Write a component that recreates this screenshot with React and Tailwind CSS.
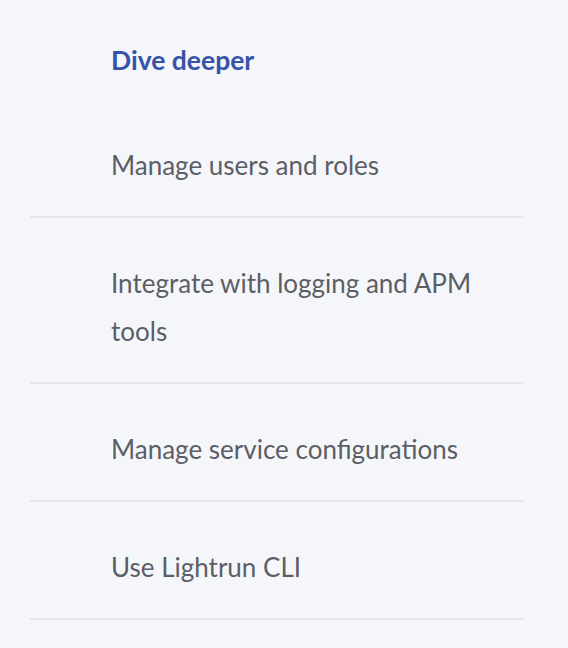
export default function App() {
  const items = [
    "Manage users and roles",
    "Integrate with logging and APM tools",
    "Manage service configurations",
    "Use Lightrun CLI",
  ];
  return (
    <div
      className="min-h-[648px] w-full bg-[#f5f6fa] pt-[36px]"
      style={{ fontFamily: "Lato, 'Open Sans', sans-serif" }}
    >
      <h2 className="ml-[111px] text-[26.5px] font-bold leading-[48px] text-[#3553a8]">
        Dive deeper
      </h2>
      <ul className="ml-[30px] mt-[16px] w-[494px]">
        {items.map((t) => (
          <li
            key={t}
            className="border-b-2 border-[#e6e7ec] pb-[27px] pl-[81px] pr-[40px] pt-[41px] text-[26px] leading-[48px] text-[#5c5e66]"
          >
            {t}
          </li>
        ))}
      </ul>
    </div>
  );
}
